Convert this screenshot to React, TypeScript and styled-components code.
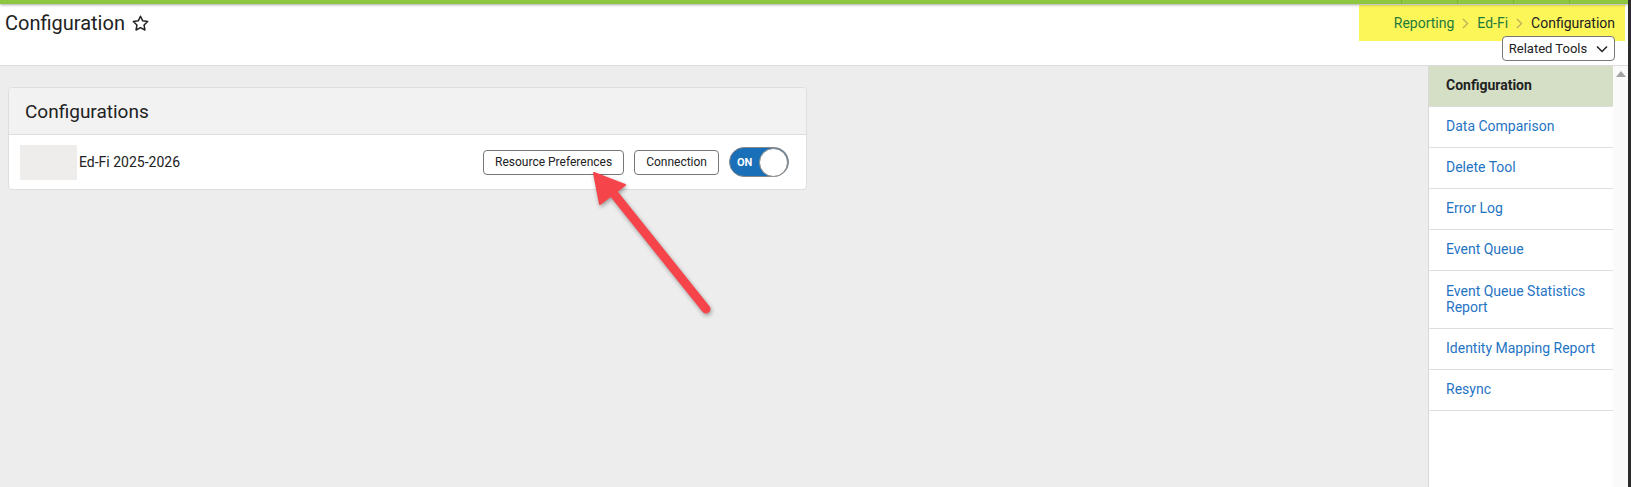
import * as React from 'react'
import styled, { createGlobalStyle } from 'styled-components'

const GlobalStyle = createGlobalStyle`
  html, body {
    margin: 0;
    padding: 0;
    background: #ffffff;
    font-family: Roboto, "Liberation Sans", Arial, sans-serif;
    color: #222;
  }
  * { box-sizing: border-box; }
`

const Page = styled.div`
  position: relative;
  display: flex;
  flex-direction: column;
  width: 1631px;
  height: 487px;
  overflow: hidden;
  border-right: 3px solid #2b2b2b;
`

const TopBar = styled.div`
  height: 4px;
  background: #8dc63f;
  display: flex;
  justify-content: flex-end;
  padding-right: 3px;
  box-shadow: 0 1px 3px rgba(0, 0, 0, 0.35);
  position: relative;
  z-index: 2;
`

const TopTab = styled.div`
  width: 56px;
  border-left: 1px solid #7fb238;
`

const Header = styled.header`
  height: 62px;
  display: flex;
  justify-content: space-between;
  background: #fff;
  border-bottom: 1px solid #dcdcdc;
`

const TitleRow = styled.div`
  display: flex;
  align-items: center;
  gap: 6px;
  padding: 2px 0 0 5px;
  height: 36px;
`

const Title = styled.h1`
  margin: 0;
  font-size: 20px;
  font-weight: 400;
  color: #222;
`

const HeaderRight = styled.div`
  display: flex;
  flex-direction: column;
  align-items: flex-end;
  padding-right: 3px;
`

const Breadcrumb = styled.nav`
  display: flex;
  align-items: center;
  gap: 8px;
  height: 36px;
  width: 266px;
  justify-content: flex-end;
  padding: 0 10px 0 0;
  margin-top: 1px;
  background: #fdf659;
  font-size: 14px;
`

const Crumb = styled.span<{ $current?: boolean }>`
  color: ${p => (p.$current ? '#222' : '#1d7b3c')};
`

const Chevron = styled.span`
  display: flex;
`

const RelatedButton = styled.button`
  margin-top: -5px;
  margin-right: 10px;
  height: 25px;
  width: 113px;
  display: flex;
  align-items: center;
  justify-content: center;
  gap: 9px;
  font-family: inherit;
  font-size: 13px;
  color: #222;
  background: #fff;
  border: 1px solid #777;
  border-radius: 4px;
  padding: 0;
`

const Body = styled.div`
  flex: 1;
  display: flex;
  min-height: 0;
`

const Main = styled.main`
  flex: 1;
  background: #ededed;
  padding: 21px 0 0 8px;
`

const Card = styled.section`
  width: 799px;
  background: #fff;
  border: 1px solid #dedede;
  border-radius: 4px;
  overflow: hidden;
`

const CardHeader = styled.div`
  height: 47px;
  display: flex;
  align-items: center;
  padding-left: 16px;
  background: #f2f2f2;
  border-bottom: 1px solid #dcdcdc;
  font-size: 19px;
  color: #222;
`

const CardRow = styled.div`
  height: 54px;
  display: flex;
  align-items: center;
  padding: 0 17px 0 11px;
`

const Thumb = styled.div`
  width: 57px;
  height: 35px;
  background: #eeedeb;
  margin-right: 2px;
`

const RowLabel = styled.span`
  flex: 1;
  font-size: 14px;
  color: #222;
`

const OutlineButton = styled.button`
  height: 25px;
  padding: 0 11px;
  margin-right: 10px;
  font-family: inherit;
  font-size: 12px;
  color: #222;
  background: #fff;
  border: 1px solid #777;
  border-radius: 4px;
`

const Toggle = styled.div<{ $on: boolean }>`
  width: 60px;
  height: 30px;
  border-radius: 15px;
  border: 1px solid #888;
  background: ${p => (p.$on ? '#1a6fb9' : '#ccc')};
  display: flex;
  align-items: center;
  justify-content: space-between;
  padding: 0 0 0 7px;
`

const ToggleText = styled.span`
  color: #fff;
  font-size: 11px;
  font-weight: 700;
`

const Knob = styled.span`
  width: 29px;
  height: 29px;
  border-radius: 50%;
  background: #fff;
  border: 1px solid #888;
`

const Sidebar = styled.aside`
  width: 185px;
  background: #fff;
  border-left: 1px solid #d8d8d8;
`

const NavItem = styled.div<{ $active?: boolean; $tall?: boolean }>`
  height: ${p => (p.$tall ? '58px' : '41px')};
  display: flex;
  align-items: center;
  padding: 0 12px 2px 17px;
  border-bottom: 1px solid #dedede;
  font-size: 14px;
  line-height: 16px;
  color: ${p => (p.$active ? '#222' : '#1f74c4')};
  font-weight: ${p => (p.$active ? 700 : 400)};
  background: ${p => (p.$active ? '#d4dfc6' : '#fff')};
`

const ScrollTrack = styled.div`
  width: 15px;
  background: #fafafa;
  display: flex;
  justify-content: center;
  padding-top: 5px;
`

const ScrollArrow = styled.span`
  width: 0;
  height: 0;
  border-left: 5px solid transparent;
  border-right: 5px solid transparent;
  border-bottom: 6px solid #a3a3a3;
`

const Annotation = styled.svg`
  position: absolute;
  left: 580px;
  top: 160px;
  overflow: visible;
  filter: drop-shadow(1px 2px 2px rgba(0, 0, 0, 0.35));
`

const navItems = [
  'Configuration',
  'Data Comparison',
  'Delete Tool',
  'Error Log',
  'Event Queue',
  'Event Queue Statistics Report',
  'Identity Mapping Report',
  'Resync',
]

const Star = () => (
  <svg width="19" height="19" viewBox="0 0 24 24" fill="none" stroke="#222" strokeWidth="1.9" strokeLinejoin="round">
    <path d="M12 2.8l2.8 5.8 6.3.9-4.6 4.4 1.1 6.3L12 17.2l-5.6 3 1.1-6.3L2.9 9.5l6.3-.9z" />
  </svg>
)

const ChevronRight = () => (
  <svg width="7" height="11" viewBox="0 0 7 11" fill="none" stroke="#b9b25c" strokeWidth="1.4">
    <path d="M1 1l4.5 4.5L1 10" />
  </svg>
)

const ChevronDown = () => (
  <svg width="12" height="8" viewBox="0 0 12 8" fill="none" stroke="#222" strokeWidth="1.5">
    <path d="M1 1.5l5 5 5-5" />
  </svg>
)

export default function App() {
  return (
    <Page>
      <GlobalStyle />
      <TopBar>
        <TopTab />
        <TopTab />
        <TopTab />
        <TopTab />
      </TopBar>
      <Header>
        <TitleRow>
          <Title>Configuration</Title>
          <Star />
        </TitleRow>
        <HeaderRight>
          <Breadcrumb>
            <Crumb>Reporting</Crumb>
            <Chevron><ChevronRight /></Chevron>
            <Crumb>Ed-Fi</Crumb>
            <Chevron><ChevronRight /></Chevron>
            <Crumb $current>Configuration</Crumb>
          </Breadcrumb>
          <RelatedButton>
            Related Tools <ChevronDown />
          </RelatedButton>
        </HeaderRight>
      </Header>
      <Body>
        <Main>
          <Card>
            <CardHeader>Configurations</CardHeader>
            <CardRow>
              <Thumb />
              <RowLabel>Ed-Fi 2025-2026</RowLabel>
              <OutlineButton>Resource Preferences</OutlineButton>
              <OutlineButton>Connection</OutlineButton>
              <Toggle $on>
                <ToggleText>ON</ToggleText>
                <Knob />
              </Toggle>
            </CardRow>
          </Card>
        </Main>
        <Sidebar>
          {navItems.map((item, i) => (
            <NavItem key={item} $active={i === 0} $tall={item.length > 25}>
              {item}
            </NavItem>
          ))}
        </Sidebar>
        <ScrollTrack>
          <ScrollArrow />
        </ScrollTrack>
      </Body>
      <Annotation width="140" height="160" viewBox="0 0 140 160">
        <line x1="34" y1="34" x2="126" y2="149" stroke="#f5454b" strokeWidth="9" strokeLinecap="round" />
        <polygon points="14,13 45,25 20,44" fill="#f5454b" stroke="#f5454b" strokeWidth="2" strokeLinejoin="round" />
      </Annotation>
    </Page>
  )
}
